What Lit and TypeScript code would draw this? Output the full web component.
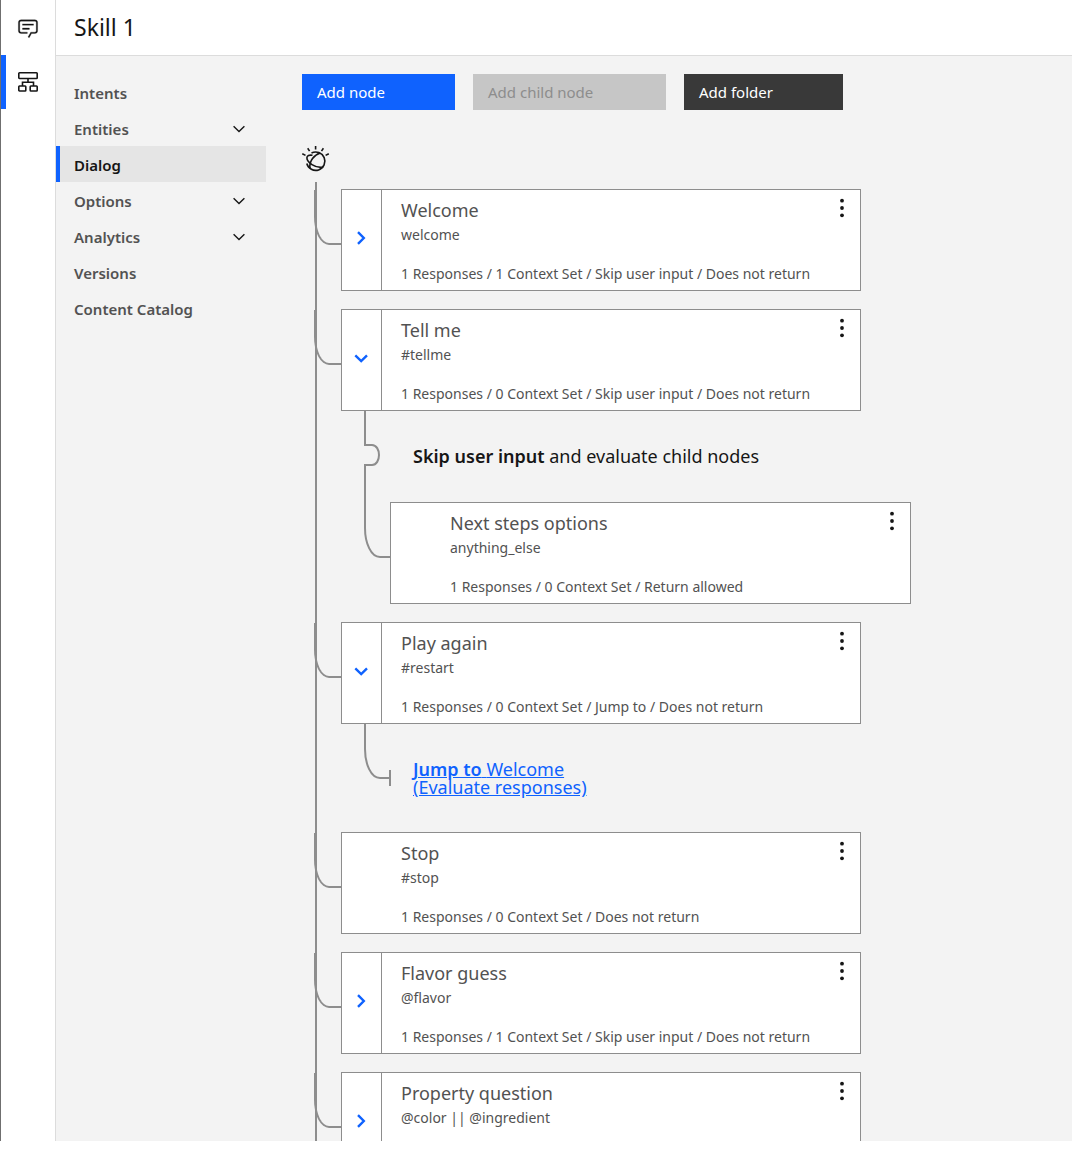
import { LitElement, html, css, nothing } from "lit";
import { customElement, property, state } from "lit/decorators.js";
import { classMap } from "lit/directives/class-map.js";

type NodeInfo = {
  title: string;
  condition: string;
  summary: string;
  state: "open" | "closed" | "leaf";
  child?: NodeInfo;
  jump?: string;
};

const NODES: NodeInfo[] = [
  { title: "Welcome", condition: "welcome", summary: "1 Responses / 1 Context Set / Skip user input / Does not return", state: "closed" },
  {
    title: "Tell me", condition: "#tellme", summary: "1 Responses / 0 Context Set / Skip user input / Does not return", state: "open",
    child: { title: "Next steps options", condition: "anything_else", summary: "1 Responses / 0 Context Set / Return allowed", state: "leaf" },
  },
  { title: "Play again", condition: "#restart", summary: "1 Responses / 0 Context Set / Jump to / Does not return", state: "open", jump: "Welcome" },
  { title: "Stop", condition: "#stop", summary: "1 Responses / 0 Context Set / Does not return", state: "leaf" },
  { title: "Flavor guess", condition: "@flavor", summary: "1 Responses / 1 Context Set / Skip user input / Does not return", state: "closed" },
  { title: "Property question", condition: "@color || @ingredient", summary: "", state: "closed" },
];

const NAV = [
  { label: "Intents", expandable: false },
  { label: "Entities", expandable: true },
  { label: "Dialog", expandable: false },
  { label: "Options", expandable: true },
  { label: "Analytics", expandable: true },
  { label: "Versions", expandable: false },
  { label: "Content Catalog", expandable: false },
];

@customElement("dialog-card")
class DialogCard extends LitElement {
  @property({ attribute: false }) node!: NodeInfo;

  static styles = css`
    :host { display: block; flex: 0 1 520px; min-width: 0; }
    * { box-sizing: border-box; }
    .card { display: flex; min-height: 102px; background: #fff; border: 1px solid #8d8d8d; }
    button { font: inherit; border: 0; background: none; padding: 0; margin: 0; display: flex; align-items: center; justify-content: center; cursor: pointer; }
    .toggle { flex: 0 0 40px; border-right: 1px solid #8d8d8d; padding: 0 1px 4px 0; }
    .spacer { flex: 0 0 40px; }
    .body { flex: 1; min-width: 0; padding: 8px 0 4px 19px; color: #525252; }
    h2, p { margin: 0; font-weight: 400; line-height: 24px; white-space: nowrap; }
    h2 { font-size: 18px; margin-bottom: 1px; }
    p { font-size: 14px; }
    .summary { margin-top: 15px; }
    .menu { flex: 0 0 36px; height: 36px; }
  `;

  render() {
    const n = this.node;
    const open = n.state === "open";
    return html`<article class="card">
      ${n.state === "leaf"
        ? html`<span class="spacer"></span>`
        : html`<button class="toggle" aria-expanded=${open} aria-label=${`Toggle ${n.title}`}>
            <svg width="14" height="14" viewBox="0 0 14 14" fill="none" stroke="#0f62fe" stroke-width="2.4">
              <path d=${open ? "M1.3 4.3 7.2 10 13 4.3" : "M4 1.2 9.8 7 4 12.8"} />
            </svg>
          </button>`}
      <div class="body">
        <h2>${n.title}</h2>
        <p>${n.condition}</p>
        ${n.summary ? html`<p class="summary">${n.summary}</p>` : nothing}
      </div>
      <button class="menu" aria-label=${`Options for ${n.title}`}>
        <svg width="20" height="20" viewBox="0 0 20 20" fill="#161616">
          <circle cx="10" cy="2.7" r="1.9" /><circle cx="10" cy="10" r="1.9" /><circle cx="10" cy="17.3" r="1.9" />
        </svg>
      </button>
    </article>`;
  }
}

@customElement("app-root")
class AppRoot extends LitElement {
  @state() private current = "Dialog";

  static styles = css`
    :host {
      display: block; box-sizing: border-box; height: 100vh; padding: 0 16px 11px 0;
      background: #fff; color: #161616; font-family: "Noto Sans", sans-serif; font-size: 15px;
    }
    * { box-sizing: border-box; }
    button { font: inherit; border: 0; background: none; margin: 0; padding: 0; cursor: pointer; }
    svg { display: block; flex: none; }
    .shell { display: flex; height: 100%; overflow: hidden; border-left: 1px solid #6f6f6f; }
    .rail { flex: 0 0 55px; display: flex; flex-direction: column; border-right: 1px solid #dcdcdc; }
    .rail button { height: 54px; display: flex; align-items: center; justify-content: center; }
    .rail .first { height: 55px; }
    .rail .active { border-left: 5px solid #0f62fe; padding-right: 5px; }
    .page { flex: 1; min-width: 0; display: flex; flex-direction: column; }
    header { flex: none; height: 56px; padding: 0 0 2px 18px; border-bottom: 1px solid #dcdcdc; display: flex; align-items: center; }
    h1 { margin: 0; font-size: 23px; line-height: 30px; font-weight: 400; }
    .work { flex: 1; min-height: 0; display: flex; gap: 36px; padding-top: 18px; background: #f3f3f3; overflow: hidden; }
    nav { flex: 0 0 210px; }
    nav a {
      display: flex; align-items: center; justify-content: space-between; height: 36px; padding: 1px 21px 0 14px;
      border-left: 4px solid transparent; color: #525252; font-weight: 600; text-decoration: none;
    }
    nav .current { background: #e5e5e5; border-left-color: #0f62fe; color: #161616; }
    main { flex: 1; min-width: 0; display: flex; flex-direction: column; }
    .actions { display: flex; gap: 18px; flex: none; }
    .actions button { height: 36px; padding-left: 15px; text-align: left; color: #fff; white-space: nowrap; }
    .actions .primary { flex: 0 1 153px; background: #0f62fe; }
    .actions .disabled { flex: 0 1 193px; background: #c6c6c6; color: #8d8d8d; cursor: default; }
    .actions .dark { flex: 0 1 159px; background: #393939; }
    .watson { flex: none; margin: 36px 0 8px; }
    .tree { flex: 1 0 auto; list-style: none; margin: 0 0 0 13px; padding: 7px 0 0; border-left: 2px solid #8d8d8d; }
    .tree li { margin-bottom: 18px; }
    .row { display: flex; }
    .branch {
      flex: 0 0 27px; height: 55px; margin: 1px 0 0 -3px;
      border: solid #8d8d8d; border-width: 0 0 2px 2px; border-bottom-left-radius: 15px 28px;
    }
    .step { display: grid; grid-template-columns: 26px minmax(0, 1fr); padding-left: 47px; }
    .step.nested { grid-template-rows: 91px auto; }
    .step.jump { grid-template-rows: 90px; }
    .link-line { grid-row: 1 / -1; overflow: visible; }
    .nested-row { display: flex; }
    .nested-row dialog-card { flex-basis: 521px; }
    .note { margin: 0; padding: 36px 0 0 23px; font-size: 18px; line-height: 18px; }
    .note a { color: #0f62fe; }
    b { font-weight: 600; }
  `;

  private step(n: NodeInfo) {
    if (n.child) {
      return html`<div class="step nested">
        <svg class="link-line" width="26" height="147" viewBox="0 0 26 147" fill="none" stroke="#8d8d8d" stroke-width="2">
          <path d="M1 0V34H8C12.5 34 15 39 15 44S12.5 54 8 54H1V117C1 132 7 146 16 146H26" />
        </svg>
        <p class="note"><b>Skip user input</b> and evaluate child nodes</p>
        <div class="nested-row"><dialog-card .node=${n.child}></dialog-card></div>
      </div>`;
    }
    if (n.jump) {
      return html`<div class="step jump">
        <svg class="link-line" width="26" height="62" viewBox="0 0 26 62" fill="none" stroke="#8d8d8d" stroke-width="2">
          <path d="M1 0V25C1 40 7 54 16 54H26M26 46V62" />
        </svg>
        <p class="note"><a href="#welcome"><b>Jump to</b> ${n.jump}<br />(Evaluate responses)</a></p>
      </div>`;
    }
    return nothing;
  }

  render() {
    return html`<div class="shell">
      <div class="rail">
        <button class="first" aria-label="Assistants">
          <svg width="22" height="22" viewBox="0 0 32 32" fill="#161616" stroke="#161616" stroke-width=".4">
            <path d="M17.74 30 16 29l4-7h6a2 2 0 0 0 2-2V8a2 2 0 0 0-2-2H6a2 2 0 0 0-2 2v12a2 2 0 0 0 2 2h9v2H6a4 4 0 0 1-4-4V8a4 4 0 0 1 4-4h20a4 4 0 0 1 4 4v12a4 4 0 0 1-4 4h-4.84z" />
            <path d="M8 10h16v2H8zM8 16h10v2H8z" />
          </svg>
        </button>
        <button class="active" aria-label="Skills">
          <svg width="20" height="20" viewBox="0 0 20 20" fill="none" stroke="#161616" stroke-width="1.6">
            <rect x=".8" y=".8" width="18.4" height="5.7" rx=".7" />
            <rect x=".8" y="14" width="7" height="5" rx=".7" />
            <rect x="12.2" y="14" width="7" height="5" rx=".7" />
            <path d="M10 6.5V10.3M4.5 14V10.3H15.5V14" />
          </svg>
        </button>
      </div>
      <div class="page">
        <header><h1>Skill 1</h1></header>
        <div class="work">
          <nav aria-label="Skill">
            ${NAV.map((item) => html`<a href="#" class=${classMap({ current: item.label === this.current })}
              @click=${(e: Event) => { e.preventDefault(); this.current = item.label; }}>
              <span>${item.label}</span>
              ${item.expandable
                ? html`<svg width="12" height="8" viewBox="0 0 12 8" fill="none" stroke="#161616" stroke-width="1.4"><path d="M.6 1.2 6 6.5 11.4 1.2" /></svg>`
                : nothing}
            </a>`)}
          </nav>
          <main>
            <div class="actions">
              <button class="primary">Add node</button>
              <button class="disabled" disabled>Add child node</button>
              <button class="dark">Add folder</button>
            </div>
            <svg class="watson" width="28" height="28" viewBox="0 0 28 28" fill="none" stroke="#161616" stroke-width="1.6">
              <path d="M.3 7.7 3.5 9.4M5.7 2.2 7.6 5.1M13.6 0V3.5M21.4 2.2 19.5 5.1M26.8 7.7 23.6 9.4" />
              <path d="M9.5 7A9.2 9.2 0 1 1 4.8 17.5" />
              <path d="M10.5 9.3C7 8.7 5 9.7 4.9 11.8 4.8 16 13 22.5 21.3 21.2" />
              <path d="M18.3 6.9C12.5 8.500 6.800 15 8 22.200" />
            </svg>
            <ul class="tree">
              ${NODES.map((n) => html`<li>
                <div class="row"><span class="branch"></span><dialog-card .node=${n}></dialog-card></div>
                ${this.step(n)}
              </li>`)}
            </ul>
          </main>
        </div>
      </div>
    </div>`;
  }
}
